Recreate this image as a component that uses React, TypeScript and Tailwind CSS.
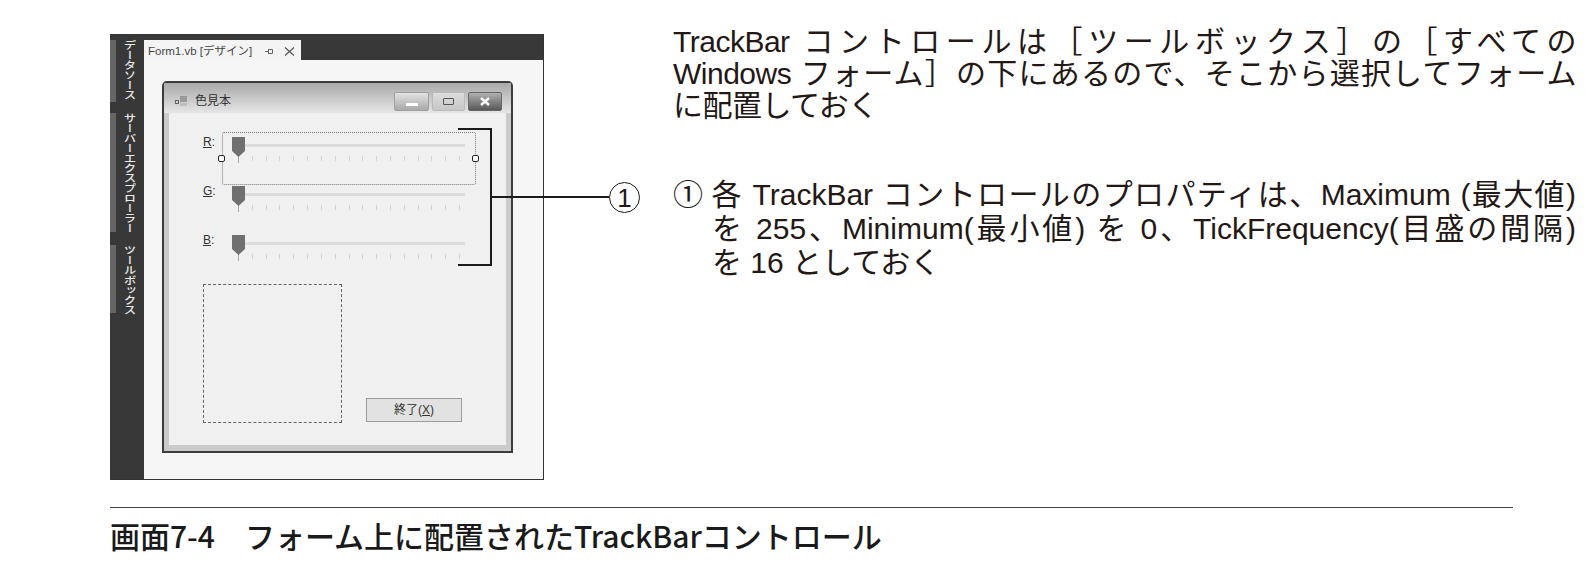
const jp = "font-['Liberation_Sans','Noto_Sans_CJK_JP',sans-serif]";

const SideTab = ({ label, height, mt }: { label: string; height: string; mt: string }) => (
    <div className={`flex ${height} ${mt}`}>
        <div className="w-[6px] bg-[#666666]"></div>
        <div className="ml-[5px] origin-center scale-x-125 [writing-mode:vertical-rl] text-[10px] font-medium leading-[14px] text-[#e8e8e8] whitespace-nowrap">{label}</div>
    </div>
);

const TrackBar = ({ label }: { label: string }) => (
    <div className="flex h-[49px]">
        <div className="w-[29px] -mt-[2px] text-[12px] leading-[14px] text-[#333333]">
            <span className="underline">{label}</span>:
        </div>
        <div className="relative w-[233px]">
            <div className="ml-[13px] mt-[7px] h-[3px] bg-[#dddddd]"></div>
            <div className="mt-[9px] flex justify-between pl-[6px] pr-[5px]">
                {Array.from({ length: 17 }).map((_, i) => (
                    <div key={i} className={`w-px ${i === 0 ? "h-[7px] bg-[#aaaaaa]" : "h-[5px] bg-[#d4d4d4]"}`}></div>
                ))}
            </div>
            {/* thumb */}
            <svg className="absolute left-0 top-0" width="13" height="20" viewBox="0 0 13 20">
                <path d="M0 0H13V14L6.5 20L0 14Z" fill="#707070" />
            </svg>
        </div>
    </div>
);

const Handle = ({ className }: { className: string }) => (
    <div className={`absolute h-[7px] w-[7px] rounded-[2px] border border-[#222222] bg-white ${className}`}></div>
);

const CaptionButtons = () => (
    <div className="flex gap-[3px]">
        <div className="flex h-[19px] w-[35px] items-end justify-center rounded-[2px] border border-[#a0a0a0] bg-gradient-to-b from-[#e4e4e4] to-[#a8a8a8] pb-[4px]">
            <div className="h-[3px] w-[12px] bg-white"></div>
        </div>
        <div className="flex h-[19px] w-[33px] items-center justify-center rounded-[2px] border border-[#bbbbbb] bg-gradient-to-b from-[#dddddd] to-[#c6c6c6]">
            <div className="h-[7px] w-[11px] rounded-[1px] border border-[#555555]"></div>
        </div>
        <div className="flex h-[19px] w-[34px] items-center justify-center rounded-[2px] border border-[#666666] bg-gradient-to-b from-[#b0b0b0] to-[#5a5a5a]">
            <svg width="12" height="9" viewBox="0 0 12 9">
                <path d="M2 1L10 8M10 1L2 8" stroke="#ffffff" strokeWidth="2.4" />
            </svg>
        </div>
    </div>
);

const FormWindow = () => (
    <div className="ml-[18px] mt-[21px] flex h-[372px] w-[351px] flex-col rounded-t-[5px] border-2 border-[#3c3c3c] bg-[#cbcbcb] px-[5px] pb-[6px]">
        <div className="-mx-[5px] flex h-[30px] items-center justify-between bg-gradient-to-b from-[#a9a9a9] to-[#e6e6e6] pl-[11px] pr-[9px] pt-[6px]">
            <div className="flex items-center gap-[8px]">
                <svg width="12" height="11" viewBox="0 0 12 11">
                    <rect x="0.5" y="4.5" width="3" height="3" fill="none" stroke="#666666" />
                    <rect x="5" y="0" width="7" height="6" fill="#9a9a9a" />
                    <rect x="5" y="7" width="7" height="3" fill="#bdbdbd" />
                </svg>
                <span className="text-[12px] text-[#333333]">色見本</span>
            </div>
            <CaptionButtons />
        </div>
        <div className="relative flex-1 bg-[#f0f0f0] pl-[34px] pt-[24px]">
            <TrackBar label="R" />
            <TrackBar label="G" />
            <TrackBar label="B" />
            <div className="flex items-end">
                <div className="h-[139px] w-[139px] border border-dashed border-[#666666]"></div>
                <div className="mb-px ml-[24px] flex h-[24px] w-[96px] items-center justify-center border border-[#9a9a9a] bg-[#e2e2e2] text-[12px] text-[#333333]">
                    終了(<span className="underline">X</span>)
                </div>
            </div>

            {/* selection around the first trackbar */}
            <div className="absolute left-[53px] top-[19px] h-[53px] w-[254px] rounded-[2px] border border-dotted border-[#777777]"></div>
            <Handle className="left-[49px] top-[42px]" />
            <Handle className="left-[303px] top-[42px]" />
        </div>
    </div>
);

const Screenshot = () => (
    <div className={`ml-[110px] mt-[34px] flex h-[446px] w-[434px] border-b border-r border-[#333333] ${jp}`}>
        <div className="flex w-[34px] flex-col bg-[#383838] pt-[6px]">
            <SideTab label="データソース" height="h-[62px]" mt="mt-0" />
            <SideTab label="サーバーエクスプローラー" height="h-[119px]" mt="mt-[11px]" />
            <SideTab label="ツールボックス" height="h-[68px]" mt="mt-[13px]" />
        </div>
        <div className="flex flex-1 flex-col bg-[#f6f6f6]">
            <div className="flex h-[26px] items-end bg-[#383838]">
                <div className="flex h-[20px] w-[157px] items-center gap-[11px] bg-[#f4f4f4] pl-[4px] pt-[3px] text-[11.5px] text-[#444444]">
                    <span>Form1.vb [デザイン]</span>
                    <svg width="8" height="7" viewBox="0 0 8 7" className="ml-[2px]">
                        <path d="M0 3.5H3M3.5 1V6M3.5 1.5H7.5V5.5H3.5" fill="none" stroke="#666666" />
                    </svg>
                    <svg width="11" height="9" viewBox="0 0 11 9">
                        <path d="M1 0.5L10 8.5M10 0.5L1 8.5" stroke="#555555" strokeWidth="1.2" />
                    </svg>
                </div>
            </div>
            <FormWindow />
        </div>
    </div>
);

const Line = ({ children, justify, indent }: { children: React.ReactNode; justify?: boolean; indent?: boolean }) => (
    <div className={`whitespace-nowrap ${justify ? "[text-align-last:justify] [text-justify:inter-character]" : ""} ${indent ? "pl-[39px]" : ""}`}>
        {children}
    </div>
);

const App = () => {
    return (
        <div lang="ja" className={`relative h-[562px] w-[1586px] overflow-hidden bg-white text-[#231815] ${jp}`}>
            <div className="flex">
                <Screenshot />
                <div className="ml-[129px] w-[903px] pt-[26px] text-[30px]">
                    <div className="leading-[32px] tracking-[-0.5px]">
                        <Line justify>TrackBar コントロールは［ツールボックス］の［すべての</Line>
                        <Line justify>Windows フォーム］の下にあるので、そこから選択してフォーム</Line>
                        <Line>に配置しておく</Line>
                    </div>
                    <div className="mt-[56px] leading-[34px]">
                        <Line justify><span className="inline-block w-[37px] [text-align-last:left]">①</span>各 TrackBar コントロールのプロパティは、Maximum (最大値)</Line>
                        <Line justify indent>を 255、Minimum(最小値) を 0、TickFrequency(目盛の間隔)</Line>
                        <Line indent>を 16 としておく</Line>
                    </div>
                </div>
            </div>

            <div className="ml-[110px] mt-[27px] w-[1403px] border-t border-[#444444] pt-[7px] font-['Noto_Sans_CJK_JP',sans-serif] text-[30px] font-medium leading-[40px] text-[#1a1a1a]">
                画面7-4　フォーム上に配置されたTrackBarコントロール
            </div>

            {/* callout over the figure */}
            <div className="absolute left-[458px] top-[128px] h-[138px] w-[34px] border-y-2 border-r-2 border-[#1a1a1a]"></div>
            <div className="absolute left-[492px] top-[196px] h-[2px] w-[117px] bg-[#1a1a1a]"></div>
            <div className="absolute left-[609px] top-[182px] flex h-[31px] w-[31px] items-center justify-center rounded-full border border-[#1a1a1a] text-[26px] leading-none">
                1
            </div>
        </div>
    );
};

export default App;
